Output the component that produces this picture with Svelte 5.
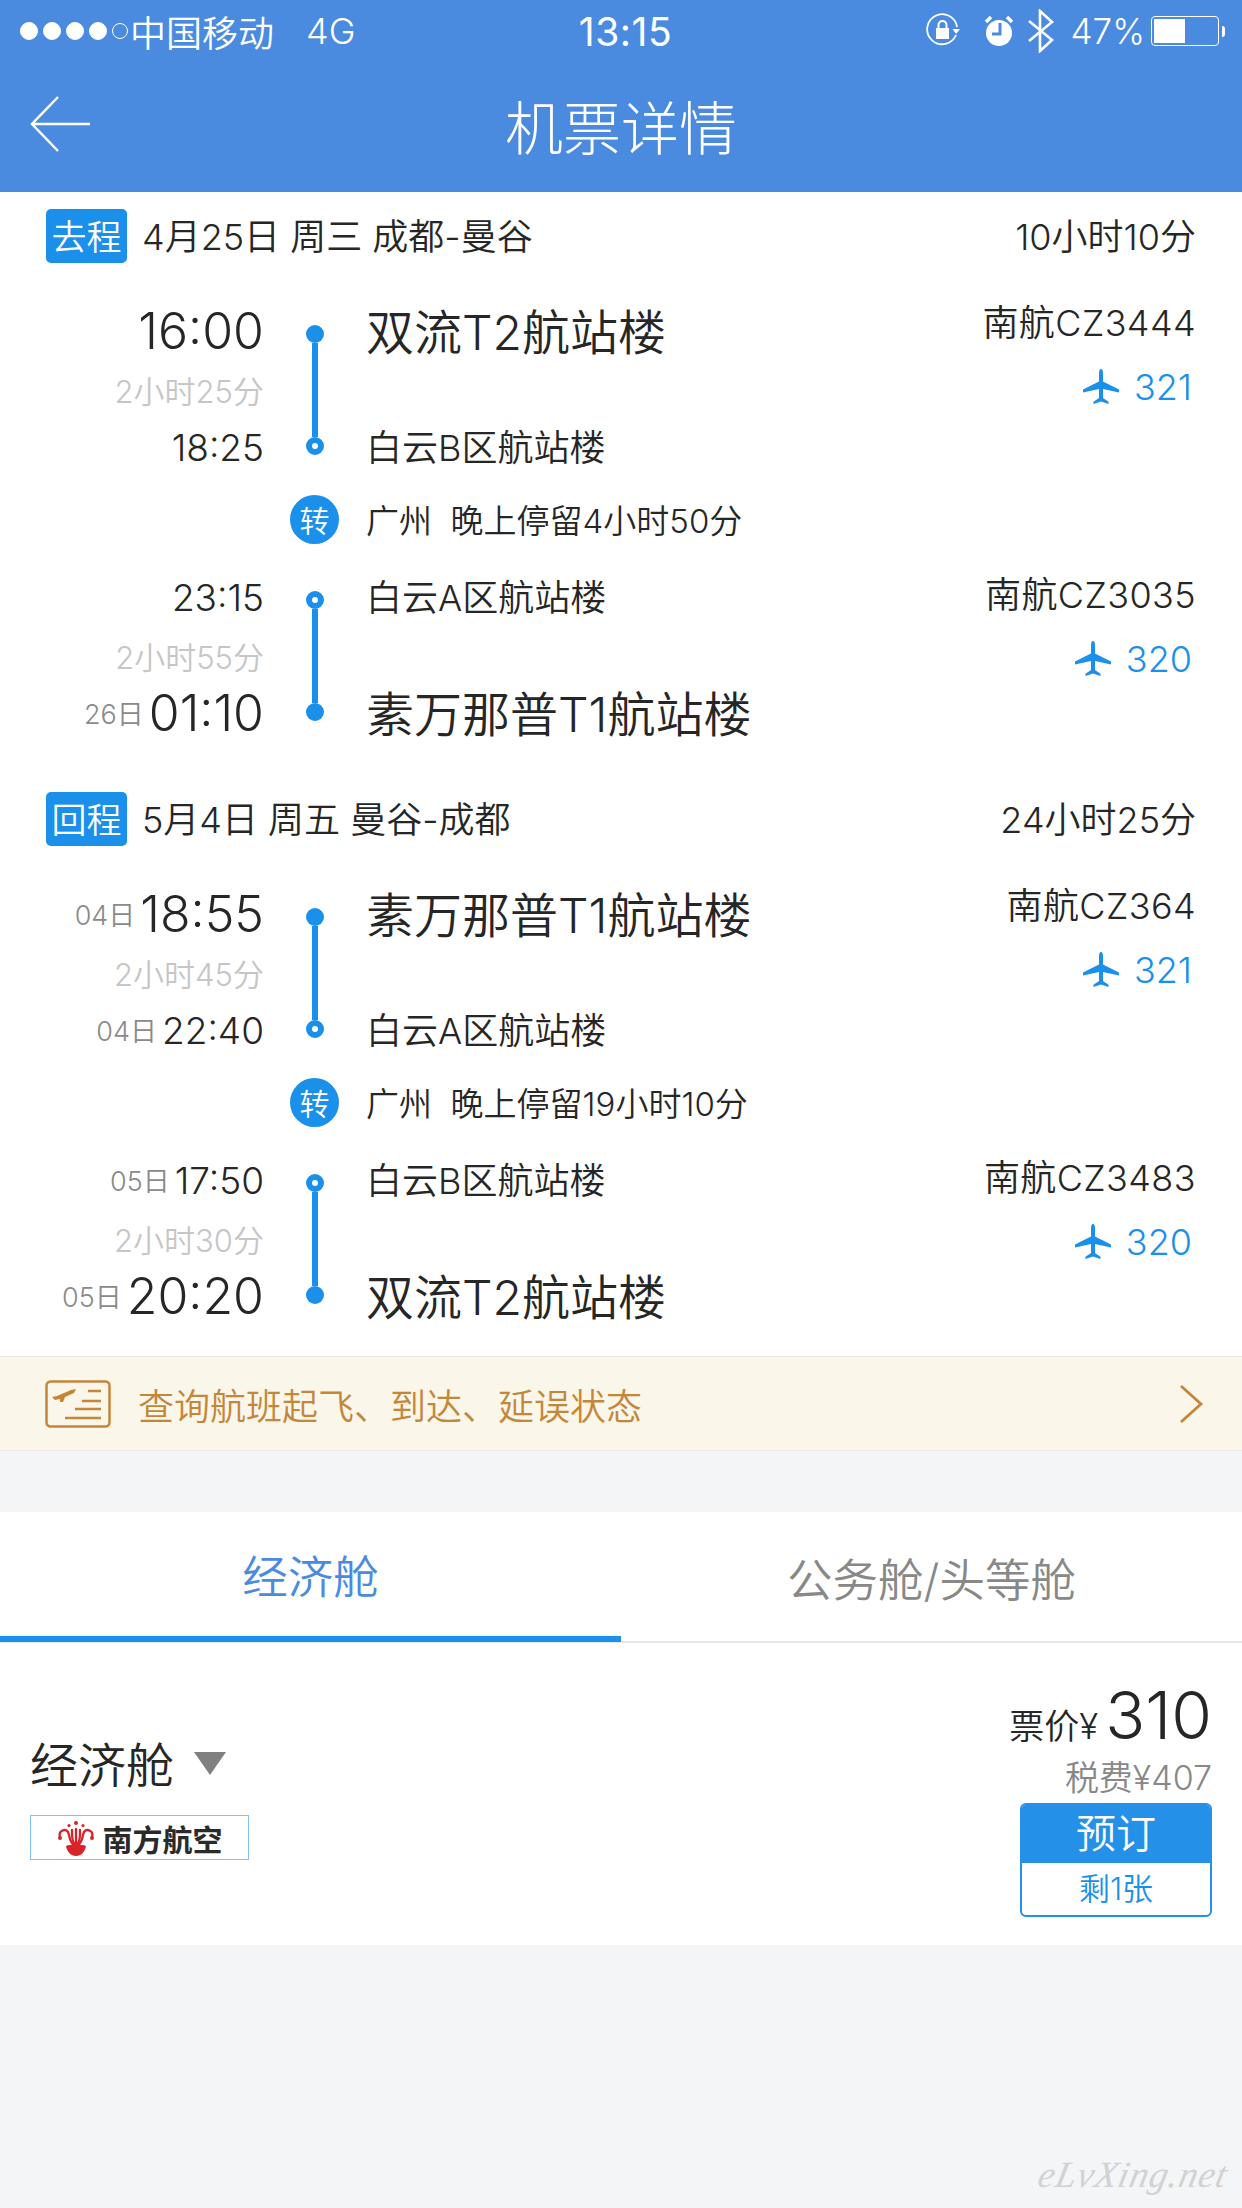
<script>
  const trips = [
    { tag: '去程', info: '4月25日 周三 成都-曼谷', total: '10小时10分',
      legs: [
        { depDay: '', dep: '16:00', arrDay: '', arr: '18:25', dur: '2小时25分', from: '双流T2航站楼', to: '白云B区航站楼', big: 'top', no: '南航CZ3444', type: '321' },
        { depDay: '', dep: '23:15', arrDay: '26日', arr: '01:10', dur: '2小时55分', from: '白云A区航站楼', to: '素万那普T1航站楼', big: 'bottom', no: '南航CZ3035', type: '320' }
      ], stop: '广州  晚上停留4小时50分' },
    { tag: '回程', info: '5月4日 周五 曼谷-成都', total: '24小时25分',
      legs: [
        { depDay: '04日', dep: '18:55', arrDay: '04日', arr: '22:40', dur: '2小时45分', from: '素万那普T1航站楼', to: '白云A区航站楼', big: 'top', no: '南航CZ364', type: '321' },
        { depDay: '05日', dep: '17:50', arrDay: '05日', arr: '20:20', dur: '2小时30分', from: '白云B区航站楼', to: '双流T2航站楼', big: 'bottom', no: '南航CZ3483', type: '320' }
      ], stop: '广州  晚上停留19小时10分' }
  ];
</script>

{#snippet leg(l)}
  <div class="leg">
    <div class="time dep" class:big={l.big === 'top'}>
      {#if l.depDay}<small>{l.depDay}</small>{/if}<span>{l.dep}</span>
    </div>
    <div class="rail">
      <i class="node" class:hollow={l.big !== 'top'}></i>
      <b></b>
      <i class="node" class:hollow={l.big === 'top'}></i>
    </div>
    <div class="port dep" class:big={l.big === 'top'}>{l.from}</div>
    <div class="flight" class:high={l.big === 'top'}>
      <div class="no">{l.no}</div>
      <div class="model">
        <svg class="plane" viewBox="0 0 38 38" aria-hidden="true"><path d="M19 1c1.3 0 2 2 2 4.500V13.500L37 21.500V24.500L21 21V30L26.500 33.800V36L19 33.500 11.500 36V33.800L17 30V21L1 24.500V21.500L17 13.500V5.500C17 3 17.700 1 19 1Z" /></svg>
        <span>{l.type}</span>
      </div>
    </div>
    <div class="dur">{l.dur}</div>
    <div class="time arr" class:big={l.big === 'bottom'}>
      {#if l.arrDay}<small>{l.arrDay}</small>{/if}<span>{l.arr}</span>
    </div>
    <div class="port arr" class:big={l.big === 'bottom'}>{l.to}</div>
  </div>
{/snippet}

<div class="page">
  <header>
    <div class="status">
      <div class="s-left">
        <span class="dots"><i></i><i></i><i></i><i></i><i class="off"></i></span>
        <span>中国移动</span><span class="net">4G</span>
      </div>
      <div class="clock">13:15</div>
      <div class="s-right">
        <svg width="36" height="36" viewBox="0 0 36 36" fill="none" stroke="#fff" stroke-width="1.800" aria-hidden="true">
          <path d="M31 22A15 15 0 1 1 32 14" />
          <path d="M27.500 16H35L31.200 21Z" fill="#fff" stroke="none" />
          <rect x="11" y="15" width="13" height="11" fill="#fff" stroke="none" />
          <path d="M13.500 15v-3a4 4 0 0 1 8 0v3" stroke-width="2" />
        </svg>
        <svg width="32" height="36" viewBox="0 0 32 36" aria-hidden="true">
          <circle cx="16" cy="20" r="13" fill="#fff" />
          <path d="M3 9 8 4M29 9 24 4" stroke="#fff" stroke-width="3.500" />
          <path d="M17 10V21H9" fill="none" stroke="#4a8be0" stroke-width="3" />
        </svg>
        <svg width="28" height="44" viewBox="0 0 28 44" fill="none" stroke="#fff" stroke-width="2.600" aria-hidden="true">
          <path d="M2 12 25 31 13 42V2L25 13 2 32" />
        </svg>
        <span class="pct">47%</span>
        <span class="battery"><i></i></span><span class="tip"></span>
      </div>
    </div>
    <div class="nav">
      <svg class="back" width="60" height="56" viewBox="0 0 60 56" fill="none" stroke="#fff" stroke-width="2.500" aria-hidden="true">
        <path d="M28 1 2 28 28 55M2 28H60" />
      </svg>
      <h1>机票详情</h1>
    </div>
  </header>

  <section class="trips">
    {#each trips as t, i}
      <div class="trip" class:second={i === 1}>
        <div class="head">
          <span class="tag">{t.tag}</span>
          <span class="info">{t.info}</span>
          <span class="total">{t.total}</span>
        </div>
        {@render leg(t.legs[0])}
        <div class="stop">
          <span class="zhuan">转</span>
          <span>{t.stop}</span>
        </div>
        {@render leg(t.legs[1])}
      </div>
    {/each}
  </section>

  <div class="strip">
    <svg width="66" height="48" viewBox="0 0 66 48" fill="none" stroke="#c4873a" stroke-width="2.500" aria-hidden="true">
      <rect x="1.500" y="1.500" width="63" height="45" rx="4" />
      <path d="M7 17 12 16 26 10 31 9 29 13 20 17 18 22 15 22 15 19 10 20Z" fill="#c4873a" stroke="none" />
      <path d="M43 11H56M37 21H56M30 29H56M20 38H56" />
    </svg>
    <span class="strip-text">查询航班起飞、到达、延误状态</span>
    <svg class="chev" width="26" height="40" viewBox="0 0 26 40" fill="none" stroke="#c4873a" stroke-width="2.800" aria-hidden="true">
      <path d="M3 2 23 20 3 38" />
    </svg>
  </div>

  <div class="tabs">
    <div class="tab active">经济舱</div>
    <div class="tab">公务舱/头等舱</div>
  </div>

  <section class="fare">
    <div class="cabin">
      <div class="cabin-name"><span>经济舱</span><i class="tri"></i></div>
      <div class="logo">
        <svg viewBox="0 0 38 36" aria-hidden="true">
          <g fill="none" stroke="#d8232a" stroke-width="2.300" stroke-linecap="round">
            <path d="M3 17C1 11 8 8 11 12 13 16 12 22 17 25" />
            <path d="M35 17C37 11 30 8 27 12 25 16 26 22 21 25" />
            <path d="M19 9V25M15 10C15 15 14.500 20 17.500 24M23 10C23 15 23.500 20 20.500 24" />
          </g>
          <g fill="#d8232a">
            <circle cx="19" cy="3" r="2" /><circle cx="12" cy="5.500" r="1.600" /><circle cx="26" cy="5.500" r="1.600" />
            <circle cx="3" cy="18" r="2" /><circle cx="35" cy="18" r="2" />
            <path d="M9 26C13 24 25 24 29 26 28 32 24 36 19 36 14 36 10 32 9 26Z" />
          </g>
        </svg>
        <span>南方航空</span>
      </div>
    </div>
    <div class="price">
      <div class="p-main"><span class="p-label">票价¥</span><span class="p-num">310</span></div>
      <div class="p-tax">税费¥407</div>
      <div class="book">
        <div class="book-top">预订</div>
        <div class="book-left">剩1张</div>
      </div>
    </div>
  </section>

  <div class="mark">eLvXing.net</div>
</div>

<style>
  :global(body) {
    margin: 0;
    background: #f4f5f7;
  }
  .page {
    width: 1242px;
    height: 2208px;
    position: relative;
    overflow: hidden;
    background: #f4f5f7;
    color: #262626;
    font-family: Inter, "Noto Sans CJK SC", sans-serif;
    font-weight: 350;
  }
  header {
    height: 192px;
    background: #4a8be0;
    color: #fff;
  }
  .status {
    height: 62px;
    padding: 0 17px 0 20px;
    display: grid;
    grid-template-columns: 1fr auto 1fr;
    align-items: center;
    font-size: 36px;
  }
  .s-left, .s-right {
    display: flex;
    align-items: center;
  }
  .s-right { justify-content: flex-end; }
  .dots {
    display: flex;
    gap: 5px;
    margin-right: 2px;
  }
  .dots i {
    width: 16px;
    height: 16px;
    border-radius: 50%;
    background: #fff;
    border: 1px solid #fff;
  }
  .dots i.off {
    background: none;
    width: 14px;
    height: 14px;
    margin: 1px 0 0;
  }
  .net { margin-left: 32px; }
  .clock { font-weight: 400; font-size: 39px; letter-spacing: 0.500px; margin-left: 6px; }
  .s-right svg:nth-child(1) { margin-right: 22px; }
  .s-right svg:nth-child(2) { margin-right: 12px; }
  .s-right svg:nth-child(3) { margin-right: 16px; }
  .pct { margin-right: 6px; font-size: 35px; }
  .battery {
    width: 68px;
    height: 30px;
    box-sizing: border-box;
    border: 1.500px solid #fff;
    border-radius: 4px;
    padding: 2px;
    display: flex;
  }
  .battery i {
    width: 31px;
    background: #fff;
  }
  .tip {
    width: 3px;
    height: 11px;
    margin-left: 3px;
    background: #fff;
    border-radius: 0 3px 3px 0;
  }
  .nav {
    height: 130px;
    box-sizing: border-box;
    padding-bottom: 5px;
    position: relative;
    display: flex;
    align-items: center;
    justify-content: center;
  }
  .back {
    position: absolute;
    left: 30px;
    top: 34px;
  }
  h1 {
    margin: 0;
    font-size: 58px;
    font-weight: 300;
  }

  .trips { background: #fff; height: 1164px; box-sizing: border-box; }
  .head {
    height: 88px;
    padding: 0 46px;
    display: flex;
    align-items: center;
    font-size: 36px;
  }
  .tag {
    width: 81px;
    height: 54px;
    box-sizing: border-box;
    padding-bottom: 4px;
    display: flex;
    align-items: center;
    justify-content: center;
    background: #1a90ea;
    color: #fff;
    border-radius: 5px;
    font-size: 35px;
    margin-right: 15px;
  }
  .info { flex: 1; padding-bottom: 5px; }
  .total { padding-bottom: 5px; }
  .leg {
    margin-top: 21px;
    display: grid;
    grid-template-columns: 264px 102px 1fr auto;
    grid-template-rows: 60px 60px 52px;
    padding-right: 46px;
    align-items: center;
  }
  .time {
    grid-column: 1;
    text-align: right;
    font-size: 37px;
    white-space: nowrap;
  }
  .time.big { font-size: 50px; }
  .time.dep { grid-row: 1; }
  .time.arr { grid-row: 3; }
  .time small {
    font-size: 27px;
    color: #8a8a8a;
    margin-right: 5px;
    vertical-align: 3px;
  }
  .time.big small { vertical-align: 7px; }
  .rail {
    grid-row: 1 / 4;
    grid-column: 2;
    height: 130px;
    display: flex;
    flex-direction: column;
    align-items: center;
    align-self: center;
    justify-self: center;
    position: relative;
    top: 3px;
  }
  .rail b {
    width: 6px;
    flex: 1;
    background: #1a90ea;
  }
  .node {
    width: 18px;
    height: 18px;
    border-radius: 50%;
    background: #1a90ea;
    box-sizing: border-box;
  }
  .node.hollow {
    background: #fff;
    border: 6px solid #1a90ea;
  }
  .port {
    font-size: 36px;
    grid-column: 3;
    white-space: nowrap;
    padding-bottom: 5px;
  }
  .port.dep { grid-row: 1; }
  .port.arr { grid-row: 3; }
  .port.big { font-size: 48px; }
  .flight {
    grid-column: 4;
    grid-row: 1 / 4;
    align-self: start;
    text-align: right;
    margin-top: -2px;
  }
  .flight.high { margin-top: -8px; }
  .no {
    font-size: 36px;
    letter-spacing: 0.400px;
    line-height: 60px;
  }
  .model {
    margin-top: 4px;
    display: flex;
    justify-content: flex-end;
    align-items: center;
    gap: 14px;
    padding-right: 4px;
    color: #1a90ea;
    font-size: 36px;
    line-height: 60px;
  }
  .plane { width: 38px; height: 38px; fill: #1a90ea; }
  .dur {
    grid-column: 1;
    grid-row: 2;
    text-align: right;
    font-size: 31px;
    color: #c6c6c6;
    padding-bottom: 4px;
  }
  .stop {
    margin: 20px 0 22px;
    height: 52px;
    padding-left: 290px;
    display: flex;
    align-items: center;
    font-size: 33px;
    white-space: pre;
  }
  .zhuan {
    width: 49px;
    height: 49px;
    border-radius: 50%;
    background: #1a90ea;
    color: #fff;
    display: flex;
    align-items: center;
    justify-content: center;
    font-size: 30px;
    margin-right: 27px;
  }
  .trip.second { margin-top: 36px; }

  .strip {
    height: 95px;
    box-sizing: border-box;
    background: #faf6e9;
    border-top: 1px solid #e9e7e0;
    border-bottom: 1px solid #e9e7e0;
    padding: 0 38px 0 45px;
    display: flex;
    align-items: center;
    color: #c4873a;
    font-size: 36px;
  }
  .strip-text { flex: 1; margin-left: 27px; }

  .tabs {
    margin-top: 61px;
    height: 131px;
    box-sizing: border-box;
    background: #fff;
    border-bottom: 2px solid #e5e6e8;
    display: grid;
    grid-template-columns: 1fr 1fr;
  }
  .tab {
    display: flex;
    align-items: center;
    justify-content: center;
    font-size: 45.500px;
    color: #888;
    box-sizing: border-box;
    height: 130px;
  }
  .tab.active {
    color: #4a8be0;
    border-bottom: 6px solid #1a90ea;
  }

  .fare {
    height: 302px;
    box-sizing: border-box;
    background: #fff;
    padding: 34px 30px 0;
    display: flex;
    justify-content: space-between;
  }
  .cabin { padding-top: 50px; }
  .cabin-name {
    display: flex;
    align-items: center;
    font-size: 48px;
    height: 70px;
  }
  .tri {
    width: 0;
    height: 0;
    margin: 3px 0 0 20px;
    border-left: 16px solid transparent;
    border-right: 16px solid transparent;
    border-top: 23px solid #808080;
  }
  .logo {
    margin-top: 18px;
    width: 219px;
    height: 45px;
    box-sizing: border-box;
    border: 1.500px solid #7fc1fa;
    display: flex;
    align-items: center;
    justify-content: center;
    gap: 8px;
    font-size: 30px;
    font-weight: 700;
    color: #2a2a2a;
    background: #fff;
  }
  .logo svg { width: 38px; height: 36px; }
  .price {
    display: flex;
    flex-direction: column;
    align-items: flex-end;
  }
  .p-main {
    display: flex;
    align-items: baseline;
    height: 76px;
    line-height: 76px;
  }
  .p-label { font-size: 35px; margin-right: 7px; }
  .p-num { font-size: 66px; }
  .p-tax {
    font-size: 34px;
    color: #888;
    line-height: 46px;
    margin-top: 2px;
  }
  .book {
    margin-top: 2px;
    width: 192px;
    height: 114px;
    box-sizing: border-box;
    border: 2px solid #2490e8;
    border-radius: 6px;
    overflow: hidden;
    text-align: center;
  }
  .book-top {
    height: 58px;
    line-height: 58px;
    background: #2490e8;
    color: #fff;
    font-size: 40px;
  }
  .book-left {
    line-height: 52px;
    color: #1a90ea;
    font-size: 31px;
  }
  .mark {
    position: absolute;
    right: 14px;
    top: 2153px;
    font-family: "Liberation Serif", serif;
    font-style: italic;
    font-size: 37px;
    letter-spacing: 1px;
    color: #d2d2d2;
    transform: skewX(-12deg);
  }
</style>
